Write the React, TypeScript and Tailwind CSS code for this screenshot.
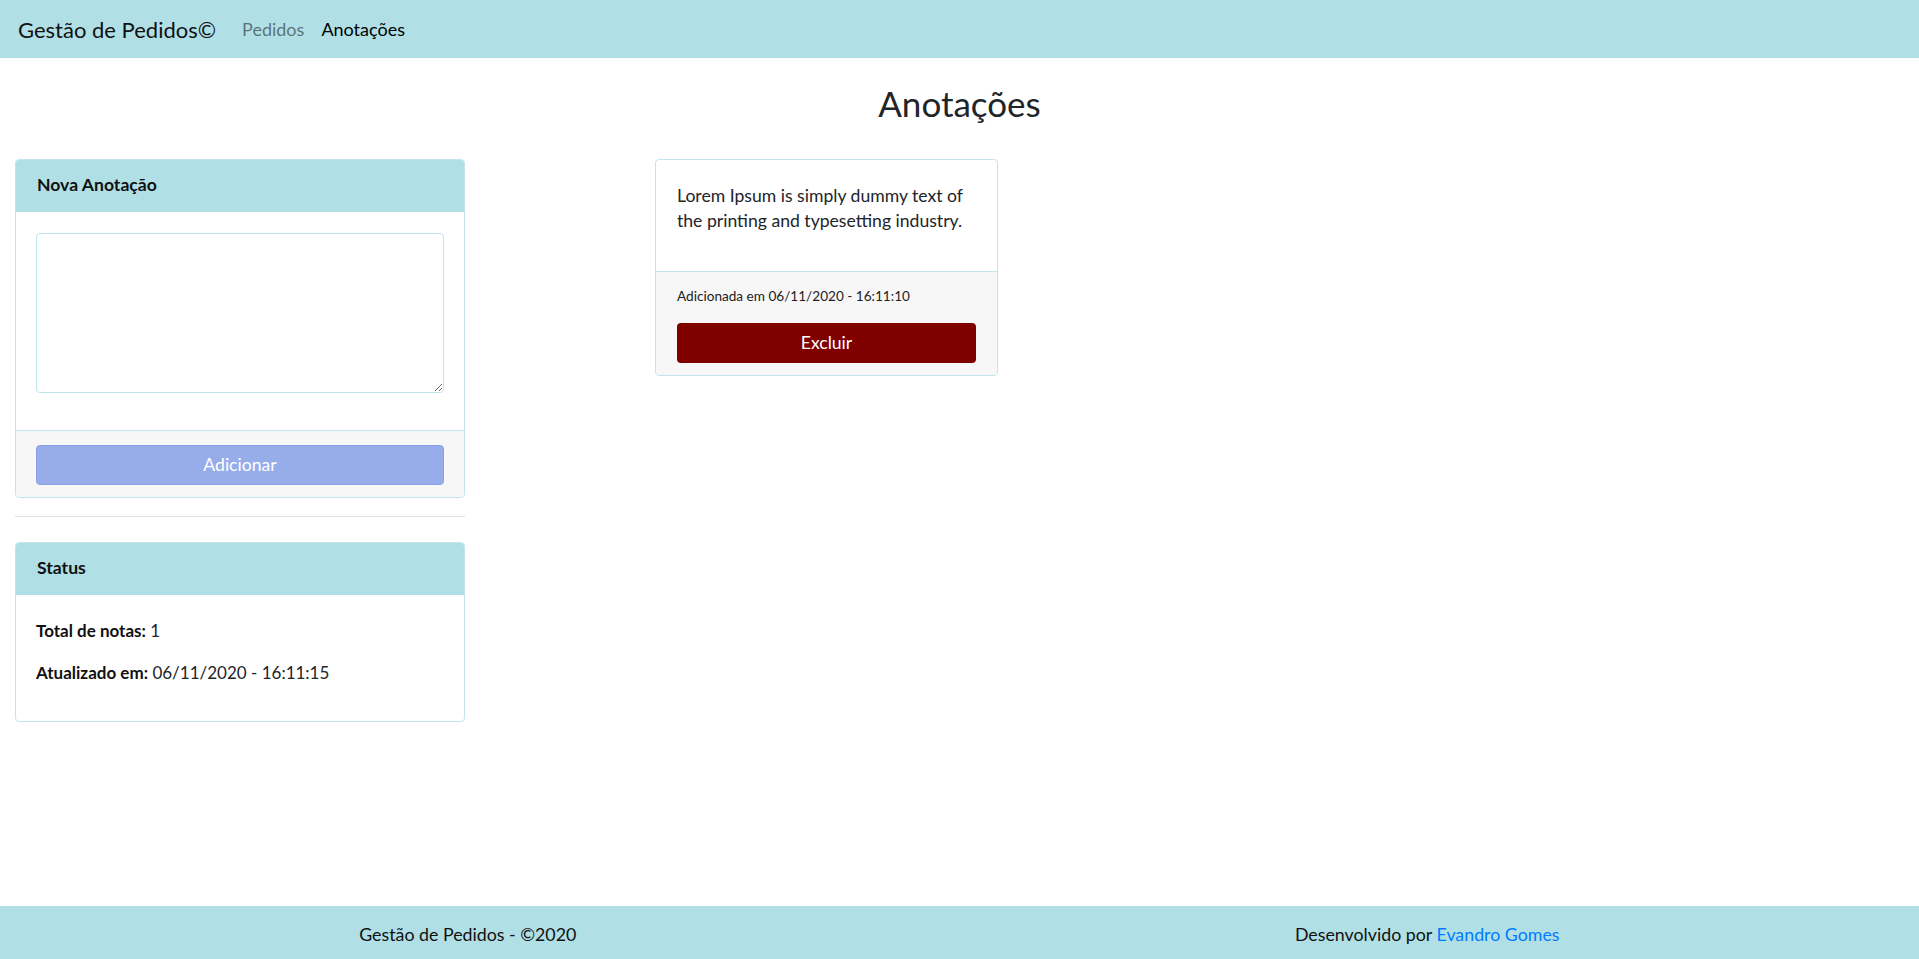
import React from "react";

const font = { fontFamily: "Lato, 'Open Sans', sans-serif" };

function CardHeader({ title }: { title: string }) {
  return (
    <div className="h-[52px] flex items-center px-[21px] bg-[#b0e0e6] rounded-t-[3px] border-b border-[#b0e0e6]">
      <span className="text-[17.6px] font-bold text-[#111]">{title}</span>
    </div>
  );
}

export default function App() {
  return (
    <div className="h-[959px] flex flex-col bg-white text-[#212529]" style={font}>
      <nav className="h-[58px] shrink-0 bg-[#b0e0e6] flex items-center px-[18px]">
        <span className="text-[22px] text-[#111] mr-[26px]">Gestão de Pedidos©</span>
        <a className="text-[18px] text-black/50 mr-[17px]">Pedidos</a>
        <a className="text-[18px] text-black">Anotações</a>
      </nav>

      <main className="flex-1 flex flex-col">
        <h1 className="text-center text-[35px] leading-[40px] pt-[25px] mb-[36px] text-[#212529]">Anotações</h1>

        <div className="flex items-start">
          <div className="w-[450px] ml-[15px] shrink-0">
            <div className="border border-[#c3e5ea] rounded-[4px] overflow-hidden">
              <CardHeader title="Nova Anotação" />
              <div className="px-[20px] pt-[21px] pb-[37px]">
                <textarea className="block w-full h-[160px] border border-[#bfe5ec] rounded-[4px] resize-y outline-none" />
              </div>
              <div className="bg-[#f7f7f7] border-t border-[#c3e5ea] px-[20px] pt-[14px] pb-[12px]">
                <button className="w-full h-[40px] rounded-[4px] bg-[#97adea] border border-[#8aa1e8] text-white text-[17.6px]">
                  Adicionar
                </button>
              </div>
            </div>

            <hr className="mt-[18px] mb-[25px] border-t border-[#e3e3e3]" />

            <div className="border border-[#c3e5ea] rounded-[4px] overflow-hidden">
              <CardHeader title="Status" />
              <div className="px-[20px] pt-[23px] pb-[20px] text-[17px] leading-[25px]">
                <p className="mb-[17px]">
                  <b className="font-bold text-[#111]">Total de notas:</b> 1
                </p>
                <p className="mb-[16px]">
                  <b className="font-bold text-[#111]">Atualizado em:</b> 06/11/2020 - 16:11:15
                </p>
              </div>
            </div>
          </div>

          <div className="ml-[190px] w-[343px] shrink-0 border border-[#c3e5ea] rounded-[4px] overflow-hidden">
            <div className="px-[21px] pt-[23px] pb-[38px] text-[17.6px] leading-[25px]">
              Lorem Ipsum is simply dummy text of the printing and typesetting industry.
            </div>
            <div className="bg-[#f7f7f7] border-t border-[#c3e5ea] px-[21px] pt-[14px] pb-[12px]">
              <div className="text-[13.6px] leading-[20px] mb-[17px] text-[#222]">Adicionada em 06/11/2020 - 16:11:10</div>
              <button className="w-full h-[40px] rounded-[4px] bg-[#800000] text-white text-[17.6px]">Excluir</button>
            </div>
          </div>
        </div>
      </main>

      <footer className="h-[53px] shrink-0 bg-[#b0e0e6] flex items-center text-[17.8px] text-[#111]">
        <div className="w-1/2 text-center pr-[24px] pt-[4px]">Gestão de Pedidos - ©2020</div>
        <div className="w-1/2 text-center pr-[24px] pt-[4px]">
          Desenvolvido por <a className="text-[#007bff]">Evandro Gomes</a>
        </div>
      </footer>
    </div>
  );
}
